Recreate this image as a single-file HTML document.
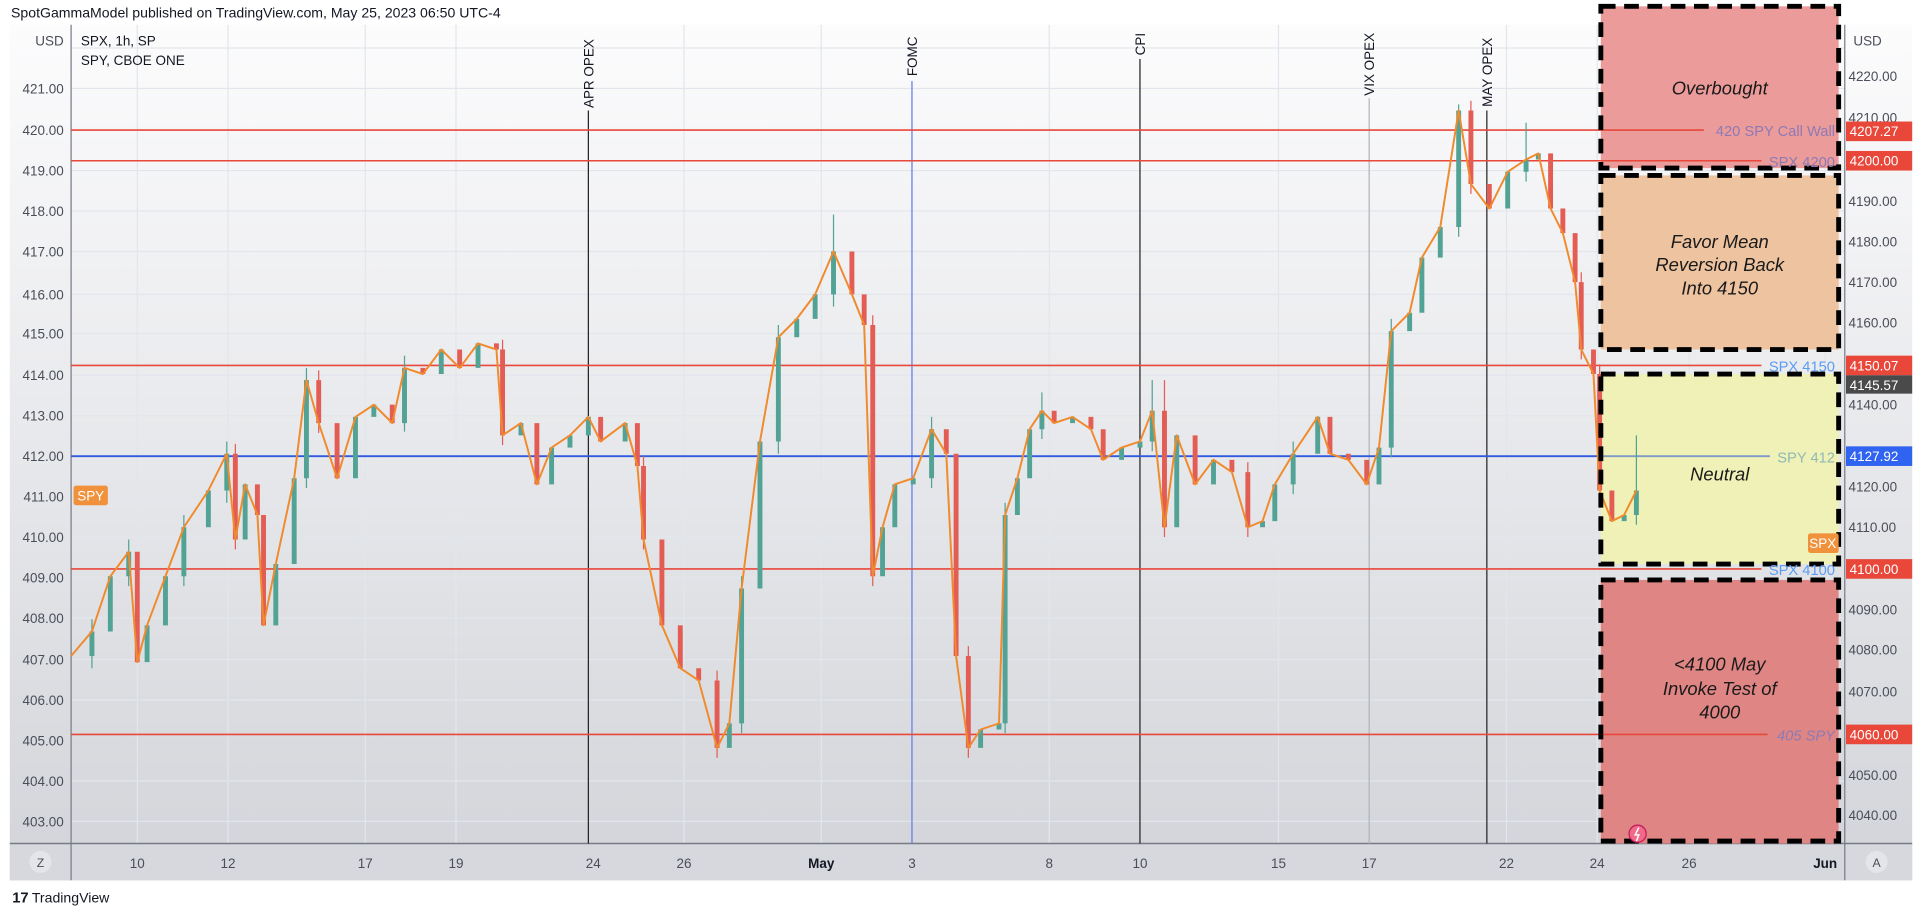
<!DOCTYPE html>
<html><head><meta charset="utf-8"><style>
html,body{margin:0;padding:0;background:#fff;width:1922px;height:916px;overflow:hidden}
svg{display:block;font-family:"Liberation Sans",sans-serif}
</style></head><body>
<svg width="1922" height="916" viewBox="0 0 1568 747" xmlns="http://www.w3.org/2000/svg">
<defs>
<linearGradient id="bg" x1="0" y1="0" x2="0" y2="1">
<stop offset="0" stop-color="#fcfcfd"/><stop offset="1" stop-color="#d2d4d9"/>
</linearGradient>
</defs>
<rect width="1568" height="747" fill="#fff"/>
<text x="9" y="14" font-size="11.5" fill="#131722">SpotGammaModel published on TradingView.com, May 25, 2023 06:50 UTC-4</text>
<rect x="8" y="20" width="1552" height="698" fill="url(#bg)"/>
<rect x="8" y="688" width="1552" height="30" fill="#d6d8dd"/>
<g stroke="#e2e6ec" stroke-width="1">
<line x1="58" y1="39" x2="1505" y2="39"/><line x1="58" y1="72" x2="1505" y2="72"/><line x1="58" y1="139" x2="1505" y2="139"/><line x1="58" y1="172" x2="1505" y2="172"/><line x1="58" y1="205" x2="1505" y2="205"/><line x1="58" y1="240" x2="1505" y2="240"/><line x1="58" y1="272" x2="1505" y2="272"/><line x1="58" y1="306" x2="1505" y2="306"/><line x1="58" y1="339" x2="1505" y2="339"/><line x1="58" y1="405" x2="1505" y2="405"/><line x1="58" y1="438" x2="1505" y2="438"/><line x1="58" y1="471" x2="1505" y2="471"/><line x1="58" y1="504" x2="1505" y2="504"/><line x1="58" y1="538" x2="1505" y2="538"/><line x1="58" y1="571" x2="1505" y2="571"/><line x1="58" y1="637" x2="1505" y2="637"/><line x1="58" y1="670" x2="1505" y2="670"/>
<line x1="112" y1="20" x2="112" y2="688"/><line x1="186" y1="20" x2="186" y2="688"/><line x1="298" y1="20" x2="298" y2="688"/><line x1="372" y1="20" x2="372" y2="688"/><line x1="558" y1="20" x2="558" y2="688"/><line x1="670" y1="20" x2="670" y2="688"/><line x1="856" y1="20" x2="856" y2="688"/><line x1="1043" y1="20" x2="1043" y2="688"/><line x1="1229" y1="20" x2="1229" y2="688"/><line x1="1303" y1="20" x2="1303" y2="688"/><line x1="1378" y1="20" x2="1378" y2="688"/><line x1="1489" y1="20" x2="1489" y2="688"/>
</g>
<line x1="58" y1="20" x2="58" y2="718" stroke="#787b86" stroke-width="1"/>
<line x1="1505" y1="20" x2="1505" y2="718" stroke="#787b86" stroke-width="1"/>
<line x1="8" y1="688" x2="1560" y2="688" stroke="#787b86" stroke-width="1.2"/>
<rect x="1306" y="5" width="194" height="132" fill="#ec9b9b"/>
<rect x="1306" y="143" width="194" height="142" fill="#eec3a0"/>
<rect x="1306" y="305" width="194" height="155" fill="#eff1b6"/>
<rect x="1306" y="473" width="194" height="215" fill="#df8583"/>
<line x1="480" y1="90" x2="480" y2="688" stroke="#222" stroke-width="1"/>
<line x1="744" y1="66" x2="744" y2="688" stroke="#5b7cf0" stroke-width="1"/>
<line x1="930" y1="48" x2="930" y2="688" stroke="#222" stroke-width="1"/>
<line x1="1117" y1="80" x2="1117" y2="688" stroke="#b0b3ba" stroke-width="1"/>
<line x1="1213" y1="90" x2="1213" y2="688" stroke="#222" stroke-width="1"/>
<g font-size="11" fill="#131722">
<text transform="translate(484,88) rotate(-90)">APR OPEX</text>
<text transform="translate(748,62) rotate(-90)">FOMC</text>
<text transform="translate(934,45) rotate(-90)">CPI</text>
<text transform="translate(1121,78) rotate(-90)">VIX OPEX</text>
<text transform="translate(1217,87) rotate(-90)">MAY OPEX</text>
</g>
<g stroke="#e8473a" stroke-width="1.3">
<line x1="58" y1="106" x2="1390" y2="106"/><line x1="58" y1="131" x2="1437" y2="131"/><line x1="58" y1="298" x2="1437" y2="298"/><line x1="58" y1="464" x2="1437" y2="464"/><line x1="58" y1="599" x2="1442" y2="599"/>
</g>
<line x1="58" y1="372" x2="1305" y2="372" stroke="#2f5ae0" stroke-width="1.5"/>
<line x1="1305" y1="372" x2="1444" y2="372" stroke="#7f98c8" stroke-width="1.5"/>
<path fill="none" stroke="#52a395" stroke-width="4" d="M75 535V515M90 515V470M105 470V450M120 540V510M135 510V470M150 470V430M170 430V400M185 400V370M200 440V395M225 510V460M240 460V390M250 390V310M290 390V340M305 340V330M330 345V300M360 305V285M390 300V280M425 355V345M450 395V365M465 365V355M480 355V340M510 360V345M595 610V590M605 590V480M620 480V360M635 360V275M650 275V260M665 260V240M680 240V205M720 470V430M730 430V395M745 395V390M760 390V350M800 610V595M815 595V590M820 590V420M830 420V390M840 390V350M850 350V335M875 345V340M915 375V365M930 365V360M940 360V335M960 430V355M990 395V375M1030 430V425M1040 425V395M1055 395V370M1075 370V340M1125 395V365M1135 365V270M1150 270V255M1160 255V210M1175 210V185M1190 185V90M1230 170V140M1245 140V130M1255 130V125M1325 425V420M1335 420V400"/>
<path fill="none" stroke="#e35d55" stroke-width="4" d="M112 450V540M192 370V440M210 395V420M215 420V510M260 310V345M275 345V390M320 330V345M345 300V305M375 285V300M405 280V285M410 285V355M438 345V395M490 340V360M520 345V380M525 380V440M540 440V510M555 510V545M570 545V555M585 555V610M695 205V240M705 240V265M712 265V470M772 350V370M780 370V535M790 535V610M860 335V345M890 340V350M900 350V375M950 335V430M975 355V395M1005 375V385M1018 385V430M1085 340V370M1100 370V375M1115 375V395M1200 90V150M1215 150V170M1265 125V170M1275 170V190M1285 190V230M1290 230V285M1300 285V305M1305 305V400M1315 400V425"/>
<path fill="none" stroke="#52a395" stroke-width="1" d="M75 545V505M105 478V440M150 478V420M185 410V360M250 398V300M330 352V290M605 598V470M635 370V265M680 250V175M760 398V340M820 598V410M850 358V320M940 368V310M1055 403V360M1135 373V260M1190 193V85M1245 148V100M1335 428V355"/>
<path fill="none" stroke="#e35d55" stroke-width="1" d="M192 362V448M260 302V353M410 277V363M525 372V448M585 547V618M712 257V478M790 527V618M950 310V438M1018 377V438M1200 82V158M1290 222V293M1305 297V408"/>
<polyline fill="none" stroke="#f08a2c" stroke-width="1.6" stroke-linejoin="round" points="58,535 75,515 90,470 105,450 112,540 120,510 135,470 150,430 170,400 185,370 192,440 200,395 210,420 215,510 225,460 240,390 250,310 260,345 275,390 290,340 305,330 320,345 330,300 345,305 360,285 375,300 390,280 405,285 410,355 425,345 438,395 450,365 465,355 480,340 490,360 510,345 520,380 525,440 540,510 555,545 570,555 585,610 595,590 605,480 620,360 635,275 650,260 665,240 680,205 695,240 705,265 712,470 720,430 730,395 745,390 760,350 772,370 780,535 790,610 800,595 815,590 820,420 830,390 840,350 850,335 860,345 875,340 890,350 900,375 915,365 930,360 940,335 950,430 960,355 975,395 990,375 1005,385 1018,430 1030,425 1040,395 1055,370 1075,340 1085,370 1100,375 1115,395 1125,365 1135,270 1150,255 1160,210 1175,185 1190,90 1200,150 1215,170 1230,140 1245,130 1255,125 1265,170 1275,190 1285,230 1290,285 1300,305 1305,400 1315,425 1325,420 1335,400"/>
<g fill="none" stroke="#000" stroke-width="4" stroke-dasharray="12,7">
<rect x="1306" y="5" width="194" height="132"/>
<rect x="1306" y="143" width="194" height="142"/>
<rect x="1306" y="305" width="194" height="155"/>
<rect x="1306" y="473" width="194" height="213"/>
</g>
<g font-size="15" font-style="italic" fill="#1a1a1a" text-anchor="middle">
<text x="1403" y="77">Overbought</text>
<text x="1403" y="202">Favor Mean</text><text x="1403" y="221">Reversion Back</text><text x="1403" y="240">Into 4150</text>
<text x="1403" y="392">Neutral</text>
<text x="1403" y="547">&lt;4100 May</text><text x="1403" y="567">Invoke Test of</text><text x="1403" y="586">4000</text>
</g>
<circle cx="1336" cy="680" r="7" fill="#f06a8a" stroke="#c2185b" stroke-width="1"/>
<path d="M1337 675 L1334 681 L1337 681 L1335 686" fill="none" stroke="#fff" stroke-width="1.2"/>
<g font-size="12" text-anchor="end">
<text x="1497" y="111" fill="#8d7ab3">420 SPY Call Wall</text>
<text x="1497" y="136" fill="#8d7ab3">SPX 4200</text>
<text x="1497" y="303" fill="#5b9cf5">SPX 4150</text>
<text x="1497" y="377" fill="#8fb9b5">SPY 412</text>
<text x="1497" y="469" fill="#5b9cf5">SPX 4100</text>
<text x="1497" y="604" fill="#8d7ab3" font-style="italic">405 SPY</text>
</g>
<rect x="60" y="396" width="28" height="16" rx="2" fill="#f0923b"/>
<text x="74" y="408" font-size="11" fill="#fff" text-anchor="middle">SPY</text>
<rect x="1475" y="435" width="25" height="16" rx="2" fill="#f0923b"/>
<text x="1487" y="447" font-size="11" fill="#fff" text-anchor="middle">SPX</text>
<g font-size="11" fill="#4a4e59" text-anchor="end">
<text x="52" y="37">USD</text>
<text x="52" y="76">421.00</text><text x="52" y="110">420.00</text><text x="52" y="143">419.00</text><text x="52" y="176">418.00</text><text x="52" y="209">417.00</text><text x="52" y="244">416.00</text><text x="52" y="276">415.00</text><text x="52" y="310">414.00</text><text x="52" y="343">413.00</text><text x="52" y="376">412.00</text><text x="52" y="409">411.00</text><text x="52" y="442">410.00</text><text x="52" y="475">409.00</text><text x="52" y="508">408.00</text><text x="52" y="542">407.00</text><text x="52" y="575">406.00</text><text x="52" y="608">405.00</text><text x="52" y="641">404.00</text><text x="52" y="674">403.00</text>
</g>
<text x="66" y="37" font-size="11" fill="#131722">SPX, 1h, SP</text>
<text x="66" y="53" font-size="11" fill="#131722">SPY, CBOE ONE</text>
<g font-size="11" fill="#4a4e59">
<text x="1512" y="37">USD</text>
<text x="1508" y="66">4220.00</text><text x="1508" y="100">4210.00</text><text x="1508" y="168">4190.00</text><text x="1508" y="201">4180.00</text><text x="1508" y="234">4170.00</text><text x="1508" y="267">4160.00</text><text x="1508" y="334">4140.00</text><text x="1508" y="401">4120.00</text><text x="1508" y="434">4110.00</text><text x="1508" y="501">4090.00</text><text x="1508" y="534">4080.00</text><text x="1508" y="568">4070.00</text><text x="1508" y="636">4050.00</text><text x="1508" y="669">4040.00</text>
</g>
<g font-size="11" fill="#fff">
<rect x="1506" y="99" width="54" height="16" fill="#e8473a"/><text x="1509" y="111">4207.27</text>
<rect x="1506" y="123" width="54" height="16" fill="#e8473a"/><text x="1509" y="135">4200.00</text>
<rect x="1506" y="290" width="54" height="16" fill="#e8473a"/><text x="1509" y="302">4150.07</text>
<rect x="1506" y="306" width="54" height="15" fill="#4a4a4a"/><text x="1509" y="318">4145.57</text>
<rect x="1506" y="364" width="54" height="16" fill="#2f63f0"/><text x="1509" y="376">4127.92</text>
<rect x="1506" y="456" width="54" height="16" fill="#e8473a"/><text x="1509" y="468">4100.00</text>
<rect x="1506" y="591" width="54" height="16" fill="#e8473a"/><text x="1509" y="603">4060.00</text>
</g>
<g font-size="11" fill="#4a4e59" text-anchor="middle">
<text x="112" y="708">10</text><text x="186" y="708">12</text><text x="298" y="708">17</text><text x="372" y="708">19</text><text x="484" y="708">24</text><text x="558" y="708">26</text><text x="670" y="708" font-weight="bold" fill="#131722">May</text><text x="744" y="708">3</text><text x="856" y="708">8</text><text x="930" y="708">10</text><text x="1043" y="708">15</text><text x="1117" y="708">17</text><text x="1229" y="708">22</text><text x="1303" y="708">24</text><text x="1378" y="708">26</text><text x="1489" y="708" font-weight="bold" fill="#131722">Jun</text>
</g>
<circle cx="33" cy="703" r="9" fill="#e3e5e9"/><text x="33" y="707" font-size="10" fill="#4a4e59" text-anchor="middle">Z</text>
<circle cx="1531" cy="703" r="9" fill="#e3e5e9"/><text x="1531" y="707" font-size="10" fill="#4a4e59" text-anchor="middle">A</text>
<text x="10" y="736" font-size="12" font-weight="bold" fill="#131722">17</text>
<text x="26" y="736" font-size="11.5" fill="#131722">TradingView</text>
</svg>
</body></html>
